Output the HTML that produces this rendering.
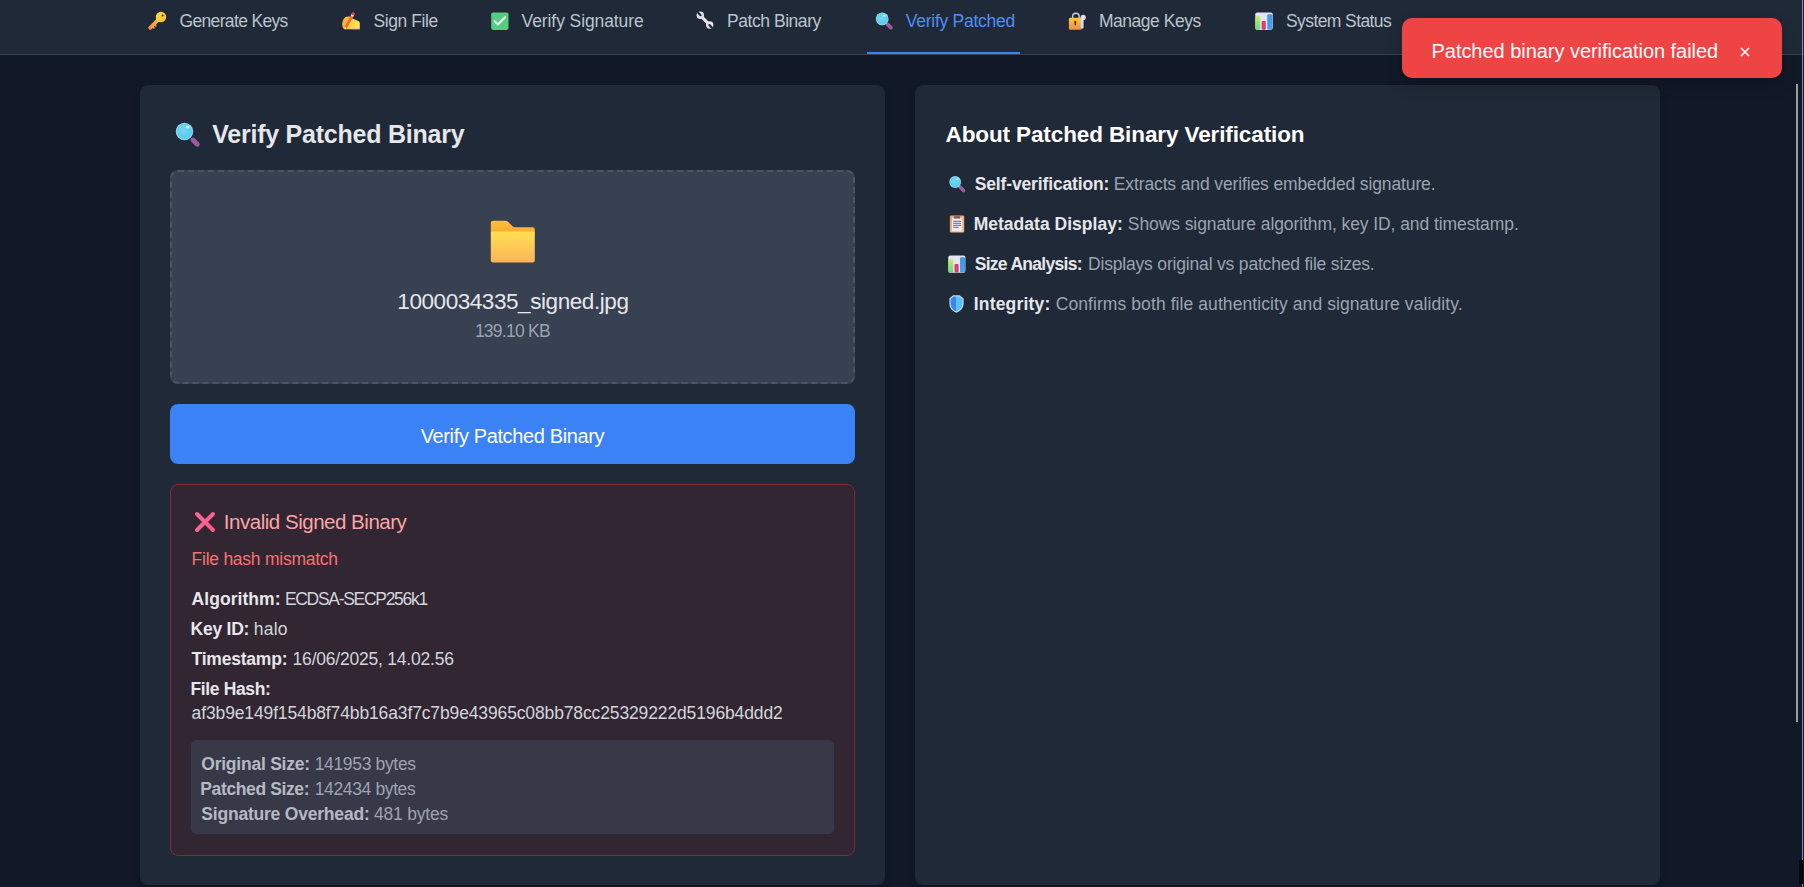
<!DOCTYPE html>
<html><head><meta charset="utf-8"><title>Verify Patched Binary</title>
<style>
html,body{margin:0;padding:0;width:1804px;height:887px;overflow:hidden;background:#111827;font-family:"Liberation Sans",sans-serif;}
.t{position:absolute;white-space:nowrap;line-height:1;}
.ic{position:absolute;overflow:visible}
.box{position:absolute;box-sizing:border-box}
</style></head><body>
<div class="box" style="left:0;top:0;width:1804px;height:55px;background:#1f2937;border-bottom:1px solid #374151"></div>
<div class="box" style="left:867px;top:52px;width:153px;height:2px;background:#3b82f6"></div>
<div class="box" style="left:140px;top:85px;width:745px;height:800px;background:#1f2937;border-radius:8px;box-shadow:0 5px 8px -1px rgba(0,0,0,.12),0 2px 5px -2px rgba(0,0,0,.12)"></div>
<div class="box" style="left:915px;top:85px;width:745px;height:800px;background:#1f2937;border-radius:8px;box-shadow:0 5px 8px -1px rgba(0,0,0,.12),0 2px 5px -2px rgba(0,0,0,.12)"></div>
<div class="box" style="left:170px;top:170px;width:685px;height:214px;background:#374151;border:2px dashed #4b5563;border-radius:8px"></div>
<div class="box" style="left:170px;top:404px;width:685px;height:60px;background:#3b82f6;border-radius:8px"></div>
<div class="box" style="left:170px;top:484px;width:685px;height:372px;background:#322632;border:1px solid #7f2b31;border-radius:8px"></div>
<div class="box" style="left:191px;top:740px;width:643px;height:94px;background:#373949;border-radius:5px"></div>
<div class="box" style="left:1402px;top:18px;width:380px;height:60px;background:#ef4444;border-radius:10px;box-shadow:0 8px 16px rgba(0,0,0,0.15)"></div>
<div class="box" style="left:1796px;top:84px;width:2px;height:638px;background:#9c9c9c"></div>
<div class="box" style="left:1802px;top:0;width:1px;height:860px;background:#7d8fb0"></div>
<div class="box" style="left:1799px;top:860px;width:4px;height:24px;background:#05070c"></div>
<div class="box" style="left:1802px;top:884px;width:1px;height:3px;background:#7d8fb0"></div>
<svg class="ic" style="left:1740px;top:46.5px;width:10px;height:10px" viewBox="0 0 10 10"><path d="M1 1 L9 9 M9 1 L1 9" stroke="#fff" stroke-width="1.6"/></svg>
<svg class="ic" style="left:147px;top:11px;width:20px;height:20px" viewBox="0 0 20 20"><defs><linearGradient id="kg147" x1="0" y1="0" x2="1" y2="1"><stop offset="0" stop-color="#fbd94a"/><stop offset="1" stop-color="#f6bd35"/></linearGradient>
<linearGradient id="ks147" x1="1" y1="0" x2="0" y2="1"><stop offset="0" stop-color="#f8bb3c"/><stop offset="1" stop-color="#f28b56"/></linearGradient></defs>
<path d="M11 9 L3.2 16.8" stroke="url(#ks147)" stroke-width="3.8" stroke-linecap="round"/>
<path d="M7.6 13.6 l1.3 1.3 M5.6 15.6 l1.3 1.3" stroke="#f3a24a" stroke-width="1.6" stroke-linecap="round"/>
<circle cx="14" cy="6" r="5.2" fill="url(#kg147)"/>
<circle cx="15.6" cy="4.5" r="1.05" fill="#3b2a18"/></svg>
<svg class="ic" style="left:341px;top:11px;width:20px;height:20px" viewBox="0 0 20 20"><defs><linearGradient id="hg" x1="0" y1="0" x2="1" y2="0.3"><stop offset="0" stop-color="#f6a432"/><stop offset="0.55" stop-color="#f9cc45"/><stop offset="1" stop-color="#fde65e"/></linearGradient></defs>
<path d="M1.2 12.6 C1.5 9.5 3 6.5 5 5.8 L9 5.6 L11.5 7.5 L17.2 10 C18.4 10.6 18.8 11.4 18.8 12.5 L18.8 17.2 C18.8 17.8 18.4 18.3 17.6 18.3 L3.6 18.3 C2 18 1 15.5 1.2 12.6 Z" fill="url(#hg)"/>
<path d="M10.5 17.2 H18.8 V18.3 H10.5Z" fill="#f0a0a8" opacity="0.85"/>
<path d="M12.2 2.8 L4.6 16.8" stroke="#f26b32" stroke-width="2.8" stroke-linecap="round"/>
<path d="M11.9 3.4 L10.9 5.3" stroke="#f6c4c4" stroke-width="2.8"/>
<path d="M12.3 2.6 L12.1 3.0" stroke="#d2403c" stroke-width="2.4" stroke-linecap="round"/>
<circle cx="4.3" cy="17.2" r="1.1" fill="#f8d0c8"/></svg>
<svg class="ic" style="left:491px;top:11.5px;width:18px;height:18px" viewBox="0 0 18 18"><rect x="0.2" y="0.5" width="17.3" height="17.4" rx="1.8" fill="#55cc7e"/>
<path d="M3.6 9.2 L7 12.4 L14 5.3" stroke="#eafff0" stroke-width="2.1" fill="none" stroke-linecap="round" stroke-linejoin="round"/></svg>
<svg class="ic" style="left:696px;top:11px;width:18px;height:18px" viewBox="0 0 18 18"><defs><mask id="wm"><rect width="18" height="18" fill="#fff"/>
<path d="M2.2 1.8 L4.6 4.2" stroke="#000" stroke-width="2.2" stroke-linecap="round"/>
<path d="M15.8 16.5 L13.4 14.1" stroke="#000" stroke-width="2.2" stroke-linecap="round"/></mask></defs>
<g mask="url(#wm)" fill="#e6e2ee">
<circle cx="4.3" cy="4.3" r="3.7"/><circle cx="13.7" cy="14" r="3.7"/>
<path d="M4.3 4.3 L13.7 14" stroke="#e6e2ee" stroke-width="3.2"/></g></svg>
<svg class="ic" style="left:874px;top:11px;width:20px;height:20px" viewBox="0 0 20 20"><defs><radialGradient id="mgn" cx="0.45" cy="0.4" r="0.65"><stop offset="0" stop-color="#72d8f2"/><stop offset="1" stop-color="#58c8ea"/></radialGradient></defs>
<path d="M13.5 13.2 L16.8 16.6" stroke="#9c5b9e" stroke-width="3.8" stroke-linecap="round"/>
<circle cx="8.2" cy="7.9" r="6.4" fill="#8fdcf2"/>
<circle cx="8.2" cy="7.9" r="5.63" fill="url(#mgn)"/>
<ellipse cx="10.44" cy="4.70" rx="1.41" ry="0.96" fill="#c8f4ff"/></svg>
<svg class="ic" style="left:1068px;top:12px;width:18px;height:18px" viewBox="0 0 18 18"><defs><linearGradient id="lg" x1="0" y1="0" x2="0" y2="1"><stop offset="0" stop-color="#fcc63e"/><stop offset="1" stop-color="#f08e4c"/></linearGradient></defs>
<path d="M4.6 6.5 V4.6 A3.3 3.3 0 0 1 11.2 4.6 V6.5" stroke="#cfcdd6" stroke-width="1.4" fill="none"/>
<rect x="0.9" y="5.8" width="12.8" height="12" rx="1.4" fill="url(#lg)"/>
<path d="M7.3 8.8 C8.4 8.8 8.6 10 8.2 10.8 L8 13.3 H6.6 L6.4 10.8 C6 10 6.2 8.8 7.3 8.8Z" fill="#5b2c24"/>
<rect x="12.8" y="6" width="2.8" height="10.5" rx="1" fill="#dcd6ec"/>
<circle cx="15.2" cy="5.4" r="2.6" fill="#dedaee"/></svg>
<svg class="ic" style="left:1255px;top:11.8px;width:18px;height:18px" viewBox="0 0 18 18"><defs><linearGradient id="cgr1255" x1="0" y1="0" x2="0" y2="1"><stop offset="0" stop-color="#c2ee6e"/><stop offset="1" stop-color="#66d97a"/></linearGradient>
<linearGradient id="cbl1255" x1="0" y1="0" x2="0" y2="1"><stop offset="0" stop-color="#3a98e8"/><stop offset="1" stop-color="#4aa2ee"/></linearGradient></defs>
<rect x="0.3" y="0.5" width="17.4" height="17.4" rx="1.8" fill="#e6e4ee"/>
<rect x="0.54" y="4.32" width="4.68" height="13.32" rx="1.2" fill="url(#cgr1255)"/>
<rect x="6.66" y="9.00" width="4.14" height="8.64" rx="1" fill="#e23a78"/>
<rect x="12.24" y="2.16" width="5.04" height="15.48" rx="1.2" fill="url(#cbl1255)"/></svg>
<svg class="ic" style="left:174px;top:121px;width:27px;height:27px" viewBox="0 0 27 27"><defs><radialGradient id="mgt" cx="0.45" cy="0.4" r="0.65"><stop offset="0" stop-color="#72d8f2"/><stop offset="1" stop-color="#58c8ea"/></radialGradient></defs>
<path d="M19 19 L23.3 23.3" stroke="#9c5b9e" stroke-width="4.8" stroke-linecap="round"/>
<circle cx="10.5" cy="10.5" r="8.7" fill="#8fdcf2"/>
<circle cx="10.5" cy="10.5" r="7.66" fill="url(#mgt)"/>
<ellipse cx="13.54" cy="6.15" rx="1.91" ry="1.30" fill="#c8f4ff"/></svg>
<svg class="ic" style="left:490px;top:220px;width:46px;height:43px" viewBox="0 0 46 43"><defs><linearGradient id="fg" x1="0" y1="0" x2="0" y2="1"><stop offset="0" stop-color="#ffdf52"/><stop offset="1" stop-color="#fdb45c"/></linearGradient>
<linearGradient id="ft" x1="0" y1="0" x2="0" y2="1"><stop offset="0" stop-color="#fdc03c"/><stop offset="1" stop-color="#f9aa2e"/></linearGradient></defs>
<path d="M0.8 3 Q0.8 0.8 3 0.8 H15.5 Q17 0.8 18 1.8 L22.5 6.3 Q23.5 7.2 25 7.2 H42.8 Q44.8 7.2 44.8 9.2 V14 H0.8 Z" fill="url(#ft)"/>
<rect x="0.8" y="11.6" width="44" height="30.8" rx="1.8" fill="url(#fg)"/></svg>
<svg class="ic" style="left:194px;top:511px;width:22px;height:22px" viewBox="0 0 22 22"><defs><linearGradient id="xg" x1="0" y1="0" x2="1" y2="1"><stop offset="0" stop-color="#f46a9e"/><stop offset="1" stop-color="#fb5a80"/></linearGradient></defs>
<path d="M3 3 L19 19 M19 3 L3 19" stroke="url(#xg)" stroke-width="4" stroke-linecap="round"/></svg>
<svg class="ic" style="left:947px;top:174px;width:20px;height:20px" viewBox="0 0 20 20"><defs><radialGradient id="mgr" cx="0.45" cy="0.4" r="0.65"><stop offset="0" stop-color="#72d8f2"/><stop offset="1" stop-color="#58c8ea"/></radialGradient></defs>
<path d="M13 13 L16.5 16.6" stroke="#9c5b9e" stroke-width="3.6" stroke-linecap="round"/>
<circle cx="8.2" cy="8" r="5.9" fill="#8fdcf2"/>
<circle cx="8.2" cy="8" r="5.19" fill="url(#mgr)"/>
<ellipse cx="10.26" cy="5.05" rx="1.30" ry="0.89" fill="#c8f4ff"/></svg>
<svg class="ic" style="left:949px;top:215px;width:16px;height:18px" viewBox="0 0 16 18"><defs><linearGradient id="cb" x1="0" y1="0" x2="1" y2="1"><stop offset="0" stop-color="#e9a670"/><stop offset="1" stop-color="#f5b880"/></linearGradient></defs>
<rect x="0.9" y="0.6" width="14.3" height="17" rx="1" fill="url(#cb)"/>
<rect x="3" y="2.6" width="10.2" height="13.8" fill="#efe8f4"/>
<rect x="4.8" y="1.2" width="6.4" height="2.2" rx="0.5" fill="#6e5a58"/>
<path d="M4.2 6.3 H12 M4.2 8.3 H12 M4.2 10.3 H12 M4.2 12.3 H9.5" stroke="#5d5c74" stroke-width="0.9"/></svg>
<svg class="ic" style="left:948.3px;top:254.9px;width:17.7px;height:17.8px" viewBox="0 0 17.7 17.8"><defs><linearGradient id="cgr948.3" x1="0" y1="0" x2="0" y2="1"><stop offset="0" stop-color="#c2ee6e"/><stop offset="1" stop-color="#66d97a"/></linearGradient>
<linearGradient id="cbl948.3" x1="0" y1="0" x2="0" y2="1"><stop offset="0" stop-color="#3a98e8"/><stop offset="1" stop-color="#4aa2ee"/></linearGradient></defs>
<rect x="0.3" y="0.5" width="17.099999999999998" height="17.2" rx="1.8" fill="#e6e4ee"/>
<rect x="0.53" y="4.27" width="4.60" height="13.17" rx="1.2" fill="url(#cgr948.3)"/>
<rect x="6.55" y="8.90" width="4.07" height="8.54" rx="1" fill="#e23a78"/>
<rect x="12.04" y="2.14" width="4.96" height="15.31" rx="1.2" fill="url(#cbl948.3)"/></svg>
<svg class="ic" style="left:949.3px;top:295px;width:15px;height:18px" viewBox="0 0 15 18"><path d="M4 0.2 H10.6 L14.6 3.6 V8.5 C14.6 13 11.5 16 7.3 17.8 C3.1 16 0.4 13 0.4 8.5 V3.6 Z" fill="#c9d9f2"/>
<path d="M7.3 1.4 V16.5 C4 15 1.6 12.5 1.6 8.5 V4.1 L4.5 1.4Z" fill="#3a84f0"/>
<path d="M7.3 1.4 V16.5 C10.6 15 13.4 12.5 13.4 8.5 V4.1 L10.2 1.4Z" fill="#55c2fa"/></svg>
<div class="t" style="left:179.50px;top:13.00px;font-size:17.5px;font-weight:400;color:#bcc3cd;letter-spacing:-0.657px;height:17.5px">Generate Keys</div>
<div class="t" style="left:373.50px;top:13.00px;font-size:17.5px;font-weight:400;color:#bcc3cd;letter-spacing:-0.419px;height:17.5px">Sign File</div>
<div class="t" style="left:521.60px;top:13.00px;font-size:17.5px;font-weight:400;color:#bcc3cd;letter-spacing:-0.094px;height:17.5px">Verify Signature</div>
<div class="t" style="left:727.00px;top:13.00px;font-size:17.5px;font-weight:400;color:#bcc3cd;letter-spacing:-0.451px;height:17.5px">Patch Binary</div>
<div class="t" style="left:905.80px;top:13.00px;font-size:17.5px;font-weight:400;color:#4f8ef5;letter-spacing:-0.262px;height:17.5px">Verify Patched</div>
<div class="t" style="left:1099.00px;top:13.00px;font-size:17.5px;font-weight:400;color:#bcc3cd;letter-spacing:-0.486px;height:17.5px">Manage Keys</div>
<div class="t" style="left:1286.00px;top:13.00px;font-size:17.5px;font-weight:400;color:#bcc3cd;letter-spacing:-0.589px;height:17.5px">System Status</div>
<div class="t" style="left:1431.50px;top:41.00px;font-size:20px;font-weight:400;color:#ffffff;letter-spacing:-0.037px;height:20px">Patched binary verification failed</div>
<div class="t" style="left:212.20px;top:121.50px;font-size:25px;font-weight:700;color:#e5e7eb;letter-spacing:-0.233px;height:25px">Verify Patched Binary</div>
<div class="t" style="left:397.30px;top:290.80px;font-size:22.5px;font-weight:400;color:#e5e7eb;letter-spacing:-0.431px;height:22.5px">1000034335_signed.jpg</div>
<div class="t" style="left:474.90px;top:322.70px;font-size:17.5px;font-weight:400;color:#9ca3af;letter-spacing:-0.757px;height:17.5px">139.10 KB</div>
<div class="t" style="left:420.70px;top:426.00px;font-size:20px;font-weight:400;color:#ffffff;letter-spacing:-0.366px;height:20px">Verify Patched Binary</div>
<div class="t" style="left:223.80px;top:512.00px;font-size:20.5px;font-weight:400;color:#fca5a5;letter-spacing:-0.477px;height:20.5px">Invalid Signed Binary</div>
<div class="t" style="left:191.60px;top:550.60px;font-size:17.5px;font-weight:400;color:#f87171;letter-spacing:-0.253px;height:17.5px">File hash mismatch</div>
<div class="t" style="left:191.50px;top:590.50px;font-size:17.5px;font-weight:700;color:#e5e7eb;letter-spacing:0.063px;height:17.5px">Algorithm:</div>
<div class="t" style="left:284.90px;top:590.50px;font-size:17.5px;font-weight:400;color:#d1d5db;letter-spacing:-1.302px;height:17.5px">ECDSA-SECP256k1</div>
<div class="t" style="left:190.50px;top:620.60px;font-size:17.5px;font-weight:700;color:#e5e7eb;letter-spacing:-0.228px;height:17.5px">Key ID:</div>
<div class="t" style="left:253.80px;top:620.60px;font-size:17.5px;font-weight:400;color:#d1d5db;letter-spacing:0.182px;height:17.5px">halo</div>
<div class="t" style="left:191.50px;top:650.60px;font-size:17.5px;font-weight:700;color:#e5e7eb;letter-spacing:-0.208px;height:17.5px">Timestamp:</div>
<div class="t" style="left:292.60px;top:650.60px;font-size:17.5px;font-weight:400;color:#d1d5db;letter-spacing:-0.216px;height:17.5px">16/06/2025, 14.02.56</div>
<div class="t" style="left:190.50px;top:680.50px;font-size:17.5px;font-weight:700;color:#e5e7eb;letter-spacing:-0.367px;height:17.5px">File Hash:</div>
<div class="t" style="left:191.60px;top:705.40px;font-size:17.5px;font-weight:400;color:#d1d5db;letter-spacing:-0.132px;height:17.5px">af3b9e149f154b8f74bb16a3f7c7b9e43965c08bb78cc25329222d5196b4ddd2</div>
<div class="t" style="left:201.30px;top:755.50px;font-size:17.5px;font-weight:700;color:#b4b9c2;letter-spacing:-0.238px;height:17.5px">Original Size:</div>
<div class="t" style="left:314.70px;top:755.50px;font-size:17.5px;font-weight:400;color:#9ca3af;letter-spacing:-0.340px;height:17.5px">141953 bytes</div>
<div class="t" style="left:200.30px;top:780.60px;font-size:17.5px;font-weight:700;color:#b4b9c2;letter-spacing:-0.380px;height:17.5px">Patched Size:</div>
<div class="t" style="left:314.70px;top:780.60px;font-size:17.5px;font-weight:400;color:#9ca3af;letter-spacing:-0.367px;height:17.5px">142434 bytes</div>
<div class="t" style="left:201.30px;top:805.60px;font-size:17.5px;font-weight:700;color:#b4b9c2;letter-spacing:-0.206px;height:17.5px">Signature Overhead:</div>
<div class="t" style="left:374.00px;top:805.60px;font-size:17.5px;font-weight:400;color:#9ca3af;letter-spacing:-0.217px;height:17.5px">481 bytes</div>
<div class="t" style="left:945.50px;top:124.20px;font-size:22.5px;font-weight:700;color:#ffffff;letter-spacing:-0.110px;height:22.5px">About Patched Binary Verification</div>
<div class="t" style="left:974.70px;top:176.00px;font-size:17.5px;font-weight:700;color:#e5e7eb;letter-spacing:-0.140px;height:17.5px">Self-verification:</div>
<div class="t" style="left:1113.80px;top:176.00px;font-size:17.5px;font-weight:400;color:#9ca3af;letter-spacing:-0.127px;height:17.5px">Extracts and verifies embedded signature.</div>
<div class="t" style="left:973.70px;top:215.60px;font-size:17.5px;font-weight:700;color:#e5e7eb;letter-spacing:0.015px;height:17.5px">Metadata Display:</div>
<div class="t" style="left:1127.80px;top:215.60px;font-size:17.5px;font-weight:400;color:#9ca3af;letter-spacing:-0.082px;height:17.5px">Shows signature algorithm, key ID, and timestamp.</div>
<div class="t" style="left:974.70px;top:255.50px;font-size:17.5px;font-weight:700;color:#e5e7eb;letter-spacing:-0.705px;height:17.5px">Size Analysis:</div>
<div class="t" style="left:1088.00px;top:255.50px;font-size:17.5px;font-weight:400;color:#9ca3af;letter-spacing:-0.181px;height:17.5px">Displays original vs patched file sizes.</div>
<div class="t" style="left:973.70px;top:295.50px;font-size:17.5px;font-weight:700;color:#e5e7eb;letter-spacing:0.196px;height:17.5px">Integrity:</div>
<div class="t" style="left:1055.70px;top:295.50px;font-size:17.5px;font-weight:400;color:#9ca3af;letter-spacing:0.083px;height:17.5px">Confirms both file authenticity and signature validity.</div>
</body></html>
